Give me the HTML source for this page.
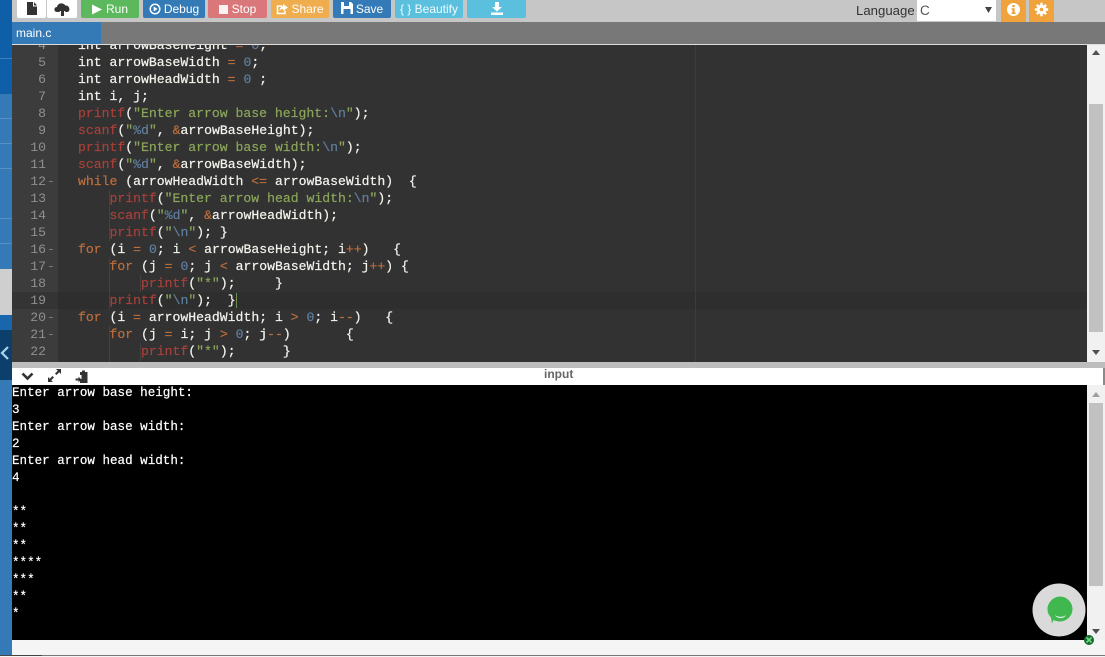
<!DOCTYPE html>
<html>
<head>
<meta charset="utf-8">
<style>
html,body{margin:0;padding:0;width:1105px;height:657px;overflow:hidden;background:#f5f5f5}
body{position:relative;font-family:"Liberation Sans",sans-serif}
.a{position:absolute}
.btn{position:absolute;top:0;height:18px;color:#fff;font-size:12px;line-height:18px;text-align:center;border-radius:0 0 2px 2px;white-space:nowrap}
.btn svg{vertical-align:-2px;margin-right:3px}
.code,.num{position:absolute;font-family:"Liberation Mono",monospace;font-size:13.13px;line-height:17px;white-space:pre;height:17px}
.code{left:78px;color:#f4f4ee;-webkit-text-stroke:.2px currentColor}
.num{left:12px;width:34px;text-align:right;color:#8f8f8f}
.k{color:#bd6e3c}.f{color:#a8403a}.s{color:#8ba65a}.n{color:#5f7f9f}.o{color:#bd6e3c}.e{color:#5f7f9f}
.guide{position:absolute;width:1px;background:#424242}
.fold{position:absolute;left:49px;width:4px;height:1px;background:#777}
#out{position:absolute;left:12px;top:385px;color:#fff;font-family:"Liberation Mono",monospace;font-size:12.57px;line-height:17px;white-space:pre;-webkit-text-stroke:.2px #fff}
</style>
</head>
<body>
<!-- sidebar -->
<div class="a" style="left:0;top:0;width:12px;height:655px;background:#337ab7"></div>
<div class="a" style="left:0;top:0;width:12px;height:94px;background:#0f5fa8"></div>
<div class="a" style="left:0;top:58px;width:12px;height:1px;background:#3f80ba"></div>
<div class="a" style="left:0;top:118px;width:12px;height:1px;background:#5590c6"></div>
<div class="a" style="left:0;top:143px;width:12px;height:1px;background:#5590c6"></div>
<div class="a" style="left:0;top:168px;width:12px;height:1px;background:#5590c6"></div>
<div class="a" style="left:0;top:218px;width:12px;height:1px;background:#5590c6"></div>
<div class="a" style="left:0;top:243px;width:12px;height:1px;background:#5590c6"></div>
<div class="a" style="left:0;top:269px;width:12px;height:46px;background:#cfcfcf"></div>
<div class="a" style="left:0;top:315px;width:12px;height:15px;background:#1a66ad"></div>
<div class="a" style="left:0;top:330px;width:12px;height:50px;background:#0c3f6c"></div>
<svg class="a" style="left:0;top:346px" width="10" height="14"><path d="M8 1 L2 7 L8 13" fill="none" stroke="#a9d4ef" stroke-width="2.200"/></svg>

<!-- top bar -->
<div class="a" style="left:12px;top:0;width:1093px;height:22px;background:#c6c6c6"></div>
<div class="btn" style="left:17px;width:29px;background:#fff"><svg style="margin:1px 0 0;vertical-align:top" width="14" height="15"><path d="M2 1H8V5.500H12V14H2Z" fill="#333"/><path d="M9 1L12 4.500H9Z" fill="#333"/></svg></div>
<div class="btn" style="left:47px;width:30px;background:#fff"><svg style="margin:1px 0 0;vertical-align:top" width="19" height="16"><path d="M4 11C.5 11 .5 6 4 6C4.500 2 10 1 12.500 4.500C16.500 4 18 10 14.500 11H12.500L9.500 6.500L6.500 11Z" fill="#333"/><path d="M9.500 6L13 10H11V15H8V10H6Z" fill="#333"/></svg></div>
<div class="btn" style="left:81px;width:58px;background:#5cb85c"><svg width="10" height="11"><path d="M0 0.500L10 5.500L0 10.500Z" fill="#fff"/></svg><span style="margin-left:1px">Run</span></div>
<div class="btn" style="left:143px;width:62px;background:#337ab7"><svg width="12" height="12"><circle cx="6" cy="6" r="4.800" fill="none" stroke="#fff" stroke-width="1.500"/><path d="M4.700 3.500L8.500 6L4.700 8.500Z" fill="#fff"/></svg>Debug</div>
<div class="btn" style="left:208px;width:59px;background:#d9777a"><svg width="10" height="10" style="vertical-align:-1px"><rect width="9" height="9" y="1" fill="#fff" opacity=".9"/></svg>Stop</div>
<div class="btn" style="left:271px;width:58px;background:#f0ad4e"><svg width="12" height="12"><path d="M9 7.500V10.500H1.500V3H6" fill="none" stroke="#fff" stroke-width="1.600"/><path d="M7 1L12 4.500L7 8V6C5 6 4 7 3.500 8.500C3.500 5.500 5 3.200 7 3Z" fill="#fff"/></svg>Share</div>
<div class="btn" style="left:333px;width:58px;background:#337ab7"><svg width="12" height="12" style="vertical-align:-1px"><path d="M0 0H10L12 2V12H0Z" fill="#fff"/><rect x="3" y="0" width="5" height="4" fill="#337ab7"/><rect x="2.500" y="7" width="7" height="5" fill="#337ab7"/></svg>Save</div>
<div class="btn" style="left:395px;width:68px;background:#5bc0de;color:#f0fbff">{ } Beautify</div>
<div class="btn" style="left:467px;width:59px;background:#5bc0de"><svg style="margin:2px 0 0;vertical-align:top" width="14" height="13"><path d="M5 0H9V5H12L7 9.500L2 5H5Z" fill="#fff"/><rect x="1" y="10.500" width="12" height="2.500" fill="#fff"/></svg></div>
<div class="a" style="left:856px;top:2px;font-size:13.200px;line-height:17px;color:#333">Language</div>
<div class="a" style="left:917px;top:0;width:79px;height:21px;background:#fff;color:#555;font-size:13.500px;line-height:21px;text-indent:3px">C</div>
<svg class="a" style="left:985px;top:7px" width="7" height="6"><path d="M0 0H7L3.500 6Z" fill="#444"/></svg>
<div class="a" style="left:1001px;top:0;width:25px;height:22px;background:#f0a23c"></div>
<svg class="a" style="left:1006px;top:2px" width="15" height="15"><circle cx="7.500" cy="7.500" r="6.500" fill="#fff"/><rect x="6.300" y="3" width="2.400" height="2.200" fill="#f0a23c"/><path d="M5.500 6.200H8.700V10.500H9.600V12H5.500V10.500H6.400V7.600H5.500Z" fill="#f0a23c"/></svg>
<div class="a" style="left:1029px;top:0;width:25px;height:22px;background:#f0a23c"></div>
<svg class="a" style="left:1034px;top:2px" width="15" height="15"><path d="M7.500 .8V14.200M.8 7.500H14.200M2.800 2.800L12.200 12.200M12.200 2.800L2.800 12.200" stroke="#fff" stroke-width="2.400"/><circle cx="7.500" cy="7.500" r="4.800" fill="#fff"/><circle cx="7.500" cy="7.500" r="1.800" fill="#f0a23c"/></svg>

<!-- tabs -->
<div class="a" style="left:12px;top:22px;width:1093px;height:22px;background:#787878"></div>
<div class="a" style="left:12px;top:22px;width:89px;height:22px;background:#337ab7;color:#fff;font-size:12px;line-height:22px;text-indent:4px">main.c</div>
<div class="a" style="left:12px;top:44px;width:1093px;height:1px;background:#ddd"></div>

<!-- editor -->
<div class="a" id="ed" style="left:12px;top:45px;width:1075px;height:317px;background:#323232"></div>
<div class="a" style="left:12px;top:45px;width:46px;height:317px;background:#3c3c3c"></div>
<div class="a" style="left:12px;top:292px;width:46px;height:17px;background:#343434"></div>
<div class="a" style="left:58px;top:292px;width:1029px;height:17px;background:#2e2e2e"></div>
<div class="a" style="left:695px;top:45px;width:1px;height:317px;background:#3c3c3c"></div>
<div class="guide" style="left:109px;top:190px;height:51px"></div>
<div class="guide" style="left:109px;top:258px;height:51px"></div>
<div class="guide" style="left:109px;top:326px;height:36px"></div>
<div class="guide" style="left:140px;top:275px;height:17px"></div>
<div class="guide" style="left:140px;top:343px;height:19px"></div>

<div class="a" style="left:12px;top:45px;width:1075px;height:317px;overflow:hidden">
<div style="position:absolute;left:-12px;top:-45px;width:1105px;height:657px">
<div class="num" style="top:37px">4</div><div class="code" style="top:37px">int arrowBaseHeight <span class="o">=</span> <span class="n">0</span>;</div>
<div class="num" style="top:54px">5</div><div class="code" style="top:54px">int arrowBaseWidth <span class="o">=</span> <span class="n">0</span>;</div>
<div class="num" style="top:71px">6</div><div class="code" style="top:71px">int arrowHeadWidth <span class="o">=</span> <span class="n">0</span> ;</div>
<div class="num" style="top:88px">7</div><div class="code" style="top:88px">int i, j;</div>
<div class="num" style="top:105px">8</div><div class="code" style="top:105px"><span class="f">printf</span>(<span class="s">"Enter arrow base height:</span><span class="e">\n</span><span class="s">"</span>);</div>
<div class="num" style="top:122px">9</div><div class="code" style="top:122px"><span class="f">scanf</span>(<span class="s">"</span><span class="e">%d</span><span class="s">"</span>, <span class="o">&amp;</span>arrowBaseHeight);</div>
<div class="num" style="top:139px">10</div><div class="code" style="top:139px"><span class="f">printf</span>(<span class="s">"Enter arrow base width:</span><span class="e">\n</span><span class="s">"</span>);</div>
<div class="num" style="top:156px">11</div><div class="code" style="top:156px"><span class="f">scanf</span>(<span class="s">"</span><span class="e">%d</span><span class="s">"</span>, <span class="o">&amp;</span>arrowBaseWidth);</div>
<div class="num" style="top:173px">12</div><div class="fold" style="top:181px"></div><div class="code" style="top:173px"><span class="k">while</span> (arrowHeadWidth <span class="o">&lt;=</span> arrowBaseWidth)  {</div>
<div class="num" style="top:190px">13</div><div class="code" style="top:190px">    <span class="f">printf</span>(<span class="s">"Enter arrow head width:</span><span class="e">\n</span><span class="s">"</span>);</div>
<div class="num" style="top:207px">14</div><div class="code" style="top:207px">    <span class="f">scanf</span>(<span class="s">"</span><span class="e">%d</span><span class="s">"</span>, <span class="o">&amp;</span>arrowHeadWidth);</div>
<div class="num" style="top:224px">15</div><div class="code" style="top:224px">    <span class="f">printf</span>(<span class="s">"</span><span class="e">\n</span><span class="s">"</span>); }</div>
<div class="num" style="top:241px">16</div><div class="fold" style="top:249px"></div><div class="code" style="top:241px"><span class="k">for</span> (i <span class="o">=</span> <span class="n">0</span>; i <span class="o">&lt;</span> arrowBaseHeight; i<span class="o">++</span>)   {</div>
<div class="num" style="top:258px">17</div><div class="fold" style="top:266px"></div><div class="code" style="top:258px">    <span class="k">for</span> (j <span class="o">=</span> <span class="n">0</span>; j <span class="o">&lt;</span> arrowBaseWidth; j<span class="o">++</span>) {</div>
<div class="num" style="top:275px">18</div><div class="code" style="top:275px">        <span class="f">printf</span>(<span class="s">"*"</span>);     }</div>
<div class="num" style="top:292px">19</div><div class="code" style="top:292px">    <span class="f">printf</span>(<span class="s">"</span><span class="e">\n</span><span class="s">"</span>);  }</div>
<div class="a" style="left:236px;top:293px;width:1px;height:15px;background:#6f8f4f"></div>
<div class="num" style="top:309px">20</div><div class="fold" style="top:317px"></div><div class="code" style="top:309px"><span class="k">for</span> (i <span class="o">=</span> arrowHeadWidth; i <span class="o">&gt;</span> <span class="n">0</span>; i<span class="o">--</span>)   {</div>
<div class="num" style="top:326px">21</div><div class="fold" style="top:334px"></div><div class="code" style="top:326px">    <span class="k">for</span> (j <span class="o">=</span> i; j <span class="o">&gt;</span> <span class="n">0</span>; j<span class="o">--</span>)       {</div>
<div class="num" style="top:343px">22</div><div class="code" style="top:343px">        <span class="f">printf</span>(<span class="s">"*"</span>);      }</div>
</div>
</div>

<!-- editor scrollbar -->
<div class="a" style="left:1087px;top:45px;width:18px;height:317px;background:#f1f1f1"></div>
<div class="a" style="left:1089px;top:104px;width:14px;height:228px;background:#c1c1c1"></div>
<svg class="a" style="left:1092px;top:50px" width="8" height="5"><path d="M0 5H8L4 0Z" fill="#505050"/></svg>
<svg class="a" style="left:1092px;top:350px" width="8" height="5"><path d="M0 0H8L4 5Z" fill="#505050"/></svg>

<!-- divider and input bar -->
<div class="a" style="left:12px;top:362px;width:1093px;height:6px;background:#bdbdbd"></div>
<div class="a" style="left:12px;top:368px;width:1091px;height:17px;background:#fff"></div>
<div class="a" style="left:1103px;top:368px;width:2px;height:17px;background:#8a8a8a"></div>
<svg class="a" style="left:21px;top:372px" width="13" height="9"><path d="M1.500 1.500L6.500 6.500L11.500 1.500" fill="none" stroke="#333" stroke-width="2.600"/></svg>
<svg class="a" style="left:47px;top:368px" width="15" height="15"><path d="M9 1H14V6L12.300 4.300L9.500 7L8 5.500L10.800 2.700ZM6 14H1V9L2.700 10.700L5.500 8L7 9.500L4.200 12.300Z" fill="#333"/></svg>
<svg class="a" style="left:75px;top:370px" width="15" height="14"><path d="M5 2H7V0.500H10V2H12.500V13H5V9H6.500V5H5Z" fill="#333"/><path d="M0.500 8.500H3.500V6.800L6.500 9.500L3.500 12.200V10.500H0.500Z" fill="#333"/></svg>
<div class="a" style="left:544px;top:367px;font-size:12px;line-height:14px;font-weight:bold;color:#666">input</div>

<!-- output -->
<div class="a" style="left:12px;top:385px;width:1075px;height:255px;background:#000"></div>
<div id="out">Enter arrow base height:
3
Enter arrow base width:
2
Enter arrow head width:
4

**
**
**
****
***
**
*</div>
<div class="a" style="left:1087px;top:385px;width:18px;height:255px;background:#f1f1f1"></div>
<div class="a" style="left:1089px;top:403px;width:14px;height:183px;background:#c1c1c1"></div>
<svg class="a" style="left:1092px;top:392px" width="8" height="5"><path d="M0 5H8L4 0Z" fill="#a0a0a0"/></svg>
<svg class="a" style="left:1092px;top:629px" width="8" height="5"><path d="M0 0H8L4 5Z" fill="#505050"/></svg>

<!-- bottom -->
<div class="a" style="left:12px;top:640px;width:1093px;height:15px;background:#f5f5f5"></div>
<div class="a" style="left:0;top:655px;width:1105px;height:2px;background:#f5f5f5"></div>
<div class="a" style="left:0;top:655px;width:42px;height:1px;background:#444"></div>
<div class="a" style="left:42px;top:655px;width:1063px;height:1px;background:#777"></div>

<!-- chat widget -->
<svg class="a" style="left:1030px;top:580px" width="66" height="68">
<circle cx="29" cy="30" r="26.500" fill="#dadada"/>
<path d="M30 16.500C37 16.500 42.500 22.500 42.500 29C42.500 35.500 37 41.500 30 41.500C27.500 41.500 25.500 40.800 23.500 40L22 43.500L21 37.500C18.500 35 17.500 32 17.500 29C17.500 22.500 23.500 16.500 30 16.500Z" fill="#41b84f"/>
<path d="M25 35C28 37.500 33 37.500 36 35C34 39 27 39 25 35Z" fill="#eef8ef"/>
<circle cx="59" cy="60" r="5" fill="#15692c"/>
<path d="M56.500 57.500L61.500 62.500M61.500 57.500L56.500 62.500" stroke="#6fd27f" stroke-width="1.800"/>
</svg>
</body>
</html>
